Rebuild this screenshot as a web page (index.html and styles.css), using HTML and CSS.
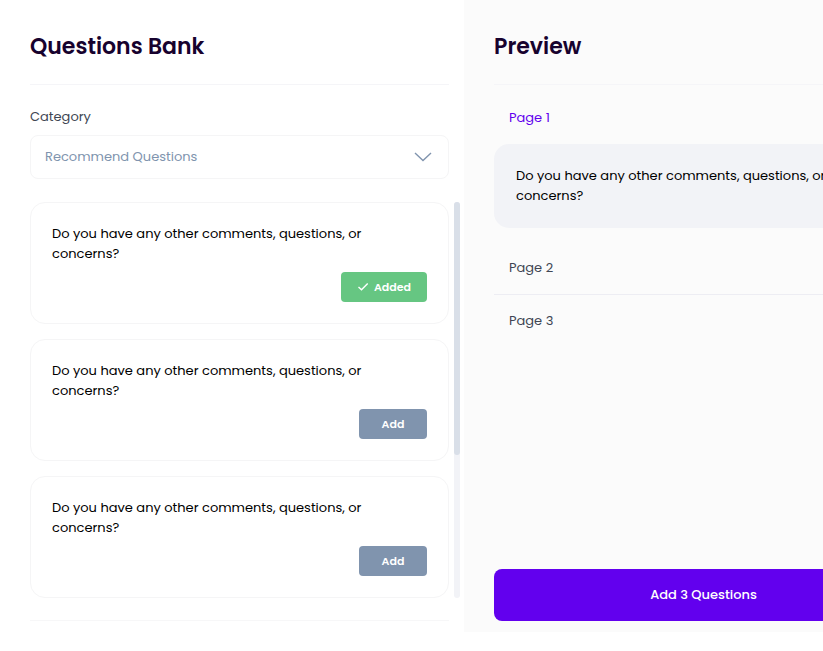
FILE: index.html
```html
<!DOCTYPE html>
<html lang="en">
<head>
<meta charset="utf-8">
<meta name="viewport" content="width=device-width, initial-scale=1">
<title>Questions Bank</title>
<link rel="stylesheet" href="styles.css">
</head>
<body>
<main class="builder">
  <section class="bank">
    <h1 class="panel-title">Questions Bank</h1>
    <label class="field-label" for="category">Category</label>
    <div class="select-wrap">
      <select id="category" class="select">
        <option>Recommend Questions</option>
      </select>
      <svg class="chevron" viewBox="0 0 18 10" aria-hidden="true"><path d="M1 1l8 7.5L17 1"/></svg>
    </div>
    <div class="scroll-area">
      <div class="cards">
        <article class="card">
          <p class="question">Do you have any other comments, questions, or concerns?</p>
          <button class="btn btn-added" type="button">
            <svg class="check" viewBox="0 0 12 9" aria-hidden="true"><path d="M1.5 5l3 2.7 6.2-6.2"/></svg>
            Added
          </button>
        </article>
        <article class="card">
          <p class="question">Do you have any other comments, questions, or concerns?</p>
          <button class="btn" type="button">Add</button>
        </article>
        <article class="card">
          <p class="question">Do you have any other comments, questions, or concerns?</p>
          <button class="btn" type="button">Add</button>
        </article>
      </div>
      <div class="track"><div class="thumb"></div></div>
    </div>
    <hr class="rule">
  </section>
  <section class="preview">
    <h2 class="panel-title">Preview</h2>
    <div class="pages">
      <button class="page page-active" type="button">Page 1</button>
      <p class="question page-question">Do you have any other comments, questions, or concerns?</p>
      <button class="page" type="button">Page 2</button>
      <hr class="rule page-rule">
      <button class="page" type="button">Page 3</button>
    </div>
    <button class="submit" type="button">Add 3 Questions</button>
  </section>
</main>
</body>
</html>
```
FILE: styles.css
```css
* {
  box-sizing: border-box;
}

body {
  margin: 0;
  overflow-x: hidden;
  background: #fff;
  color: #000;
  font-family: Poppins, Inter, sans-serif;
  font-size: 13px;
  line-height: 20px;
}

button,
select {
  font: inherit;
}

.builder {
  display: grid;
  grid-template-columns: minmax(464px, 1fr) minmax(479px, 1fr);
}

.bank {
  padding: 0 4px 11px 30px;
}

.preview {
  display: flex;
  flex-direction: column;
  padding: 0 30px 11px;
  background: #fbfbfb;
}

.panel-title {
  margin: 0;
  padding: 31px 0 21px;
  border-bottom: 1px solid #f5f5f8;
  color: #17022e;
  font-size: 22px;
  font-weight: 600;
  line-height: 32px;
}

.bank .panel-title,
.bank .rule,
.select-wrap {
  margin-right: 11px;
}

.field-label {
  display: block;
  margin: 22px 0 8px;
  color: #404653;
}

.select-wrap {
  position: relative;
}

.select {
  display: block;
  width: 100%;
  height: 44px;
  padding: 0 40px 0 14px;
  border: 1px solid #f5f5f6;
  border-radius: 8px;
  appearance: none;
  background: #fff;
  color: #8094ae;
}

.chevron {
  position: absolute;
  top: 17px;
  right: 17px;
  width: 18px;
  height: 10px;
  fill: none;
  stroke: #8094ae;
  stroke-width: 1.4;
  pointer-events: none;
}

.scroll-area {
  display: flex;
  gap: 5px;
  margin: 23px 0 22px;
}

.cards {
  display: grid;
  flex: 1;
  gap: 15px;
}

.card {
  display: flex;
  flex-direction: column;
  align-items: flex-end;
  gap: 8px;
  padding: 21px;
  border: 1px solid #f5f5f6;
  border-radius: 15px;
}

.question {
  width: 100%;
  margin: 0;
}

.card .question {
  padding-right: 40px;
}

.btn {
  display: flex;
  align-items: center;
  justify-content: center;
  gap: 5px;
  min-width: 68px;
  height: 30px;
  padding: 0 16px 1px;
  border: 0;
  border-radius: 4px;
  background: #8094ae;
  color: #fff;
  font-size: 11px;
  font-weight: 600;
}

.btn-added {
  background: #66c682;
}

.check {
  width: 12px;
  height: 9px;
  fill: none;
  stroke: #fff;
  stroke-width: 1.4;
}

.track {
  width: 6px;
  border-radius: 3px;
  background: #f2f3f7;
}

.thumb {
  height: 64%;
  border-radius: 3px;
  background: #d9dfe8;
}

.rule {
  height: 1px;
  margin: 0;
  border: 0;
  background: #f7f7f8;
}

.page-rule {
  background: #ededf3;
}

.pages {
  display: flex;
  flex: 1;
  flex-direction: column;
  padding-top: 7px;
}

.page {
  height: 52px;
  padding: 0 15px;
  border: 0;
  background: none;
  color: #404653;
  text-align: left;
}

.page-active {
  color: #6200ee;
}

.page-question {
  margin-bottom: 14px;
  padding: 22px 60px 22px 22px;
  border-radius: 15px;
  background: #f2f3f7;
}

.submit {
  height: 52px;
  border: 0;
  border-radius: 8px;
  background: #6200ee;
  color: #fff;
  font-weight: 500;
}
```
